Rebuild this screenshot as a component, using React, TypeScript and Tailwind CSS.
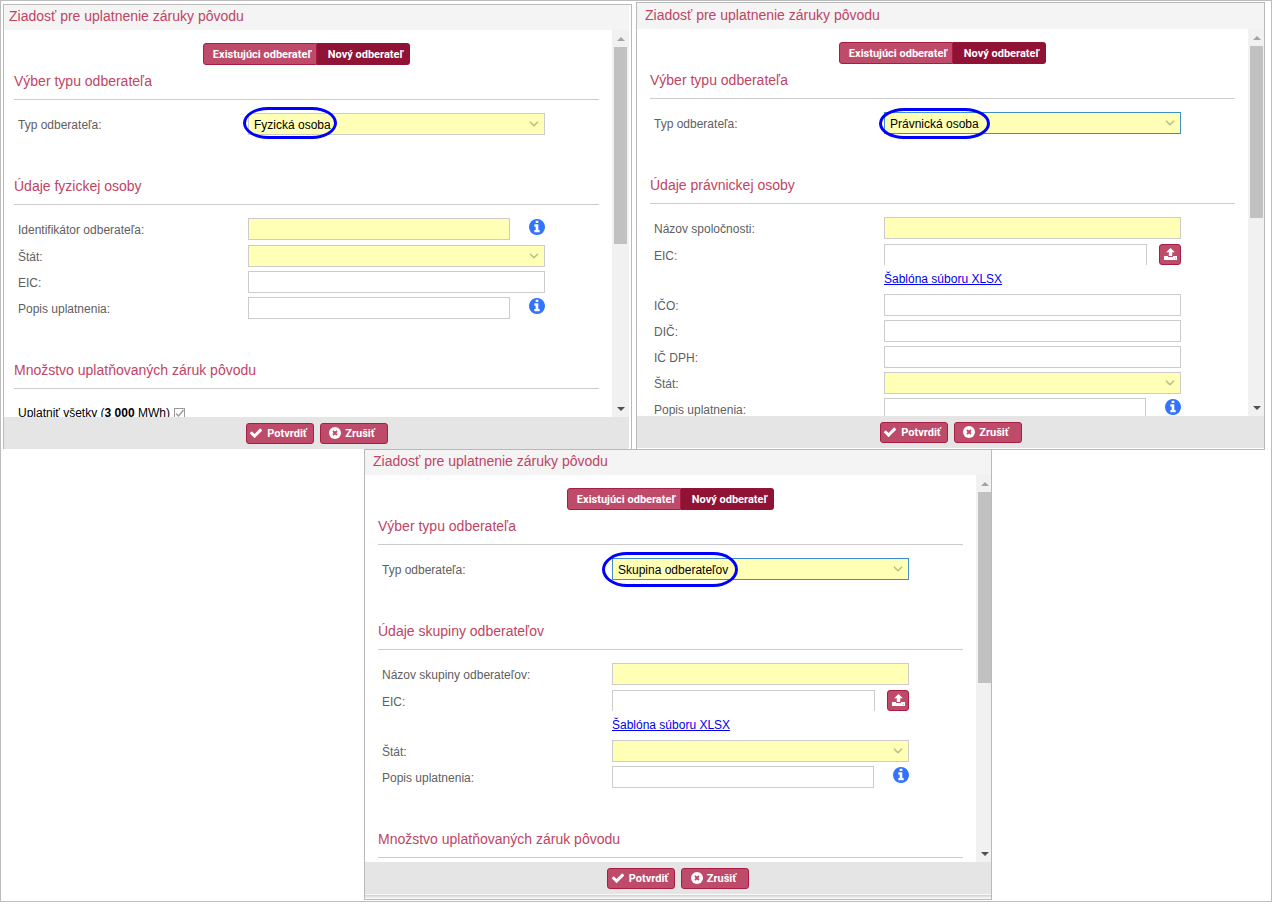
import React, { useId } from 'react'
import { clsx } from 'clsx'

type FieldKind = 'text' | 'info' | 'upload' | 'select'

interface Field {
    label: string
    kind: FieldKind
    required?: boolean
}

interface PanelProps {
    type: string
    typeFocused?: boolean
    sectionTitle: string
    fields: Field[]
    amount?: boolean
    className: string
    headerClass: string
    bodyClass: string
    footerClass?: string
    trackClass: string
    thumbClass: string
    markClass: string
    children?: React.ReactNode
}

const TYPES = ['Fyzická osoba', 'Právnická osoba', 'Skupina odberateľov']

const primaryButton = "cursor-pointer rounded-[3px] border border-[#a81d44] bg-[#bf4b6b] text-white"
const labelClass = "w-[230px] shrink-0 pt-px text-xs leading-[22px] text-[#606060]"

const CheckIcon = () => (
    <svg viewBox="0 0 1792 1792" className="mb-1 size-[14px]" fill="currentColor">
        <path d="M1671 566q0 40-28 68l-724 724-136 136q-28 28-68 28t-68-28l-136-136-362-362q-28-28-28-68t28-68l136-136q28-28 68-28t68 28l294 295 656-657q28-28 68-28t68 28l136 136q28 28 28 68z" />
    </svg>
)

const CancelIcon = () => (
    <svg viewBox="0 0 12 12" className="mb-1 size-3">
        <circle cx="6" cy="6" r="6" fill="currentColor" />
        <path d="M4 4 L8 8 M8 4 L4 8" stroke="#bf4b6b" strokeWidth="1.8" />
    </svg>
)

const InfoIcon = () => (
    <svg viewBox="0 0 1536 1536" className="size-4" fill="#3273ff">
        <path d="M1024 1248v-160q0-14-9-23t-23-9h-96v-512q0-14-9-23t-23-9h-320q-14 0-23 9t-9 23v160q0 14 9 23t23 9h96v320h-96q-14 0-23 9t-9 23v160q0 14 9 23t23 9h448q14 0 23-9t9-23zm-128-896v-160q0-14-9-23t-23-9h-192q-14 0-23 9t-9 23v160q0 14 9 23t23 9h192q14 0 23-9t9-23zm640 416q0 209-103 385.5t-279.5 279.5-385.5 103-385.5-103-279.5-279.5-103-385.5 103-385.5 279.5-279.5 385.5-103 385.5 103 279.5 279.5 103 385.5z" />
    </svg>
)

const UploadIcon = () => (
    <svg viewBox="0 0 13 12" className="mb-[2px] h-3 w-[13px]" fill="currentColor">
        <path d="M6.5 0 L10.8 4.2 H8.2 V8 H4.8 V4.2 H2.2 Z" />
        <path d="M0 8 H4 V9 H9 V8 H13 V12 H0 Z" />
        <path d="M11 10.4 H12" stroke="#bf4b6b" strokeWidth="0.6" />
    </svg>
)

const SelectBox = ({ id, options, focused }: { id: string, options: string[], focused?: boolean }) => (
    <div className="relative w-full">
        <select
            id={id}
            className={clsx(
                "block h-[22px] w-full appearance-none border bg-[#ffffb5] px-[5px] pt-px text-xs text-black outline-none",
                focused ? "border-[#3d8fc4]" : "border-[#cccccc]"
            )}
        >
            {options.map((o) => <option key={o}>{o}</option>)}
        </select>
        <svg viewBox="0 0 10 6" className="pointer-events-none absolute top-2 right-[6px] h-[6px] w-[10px]" fill="none" stroke="#b9b98c" strokeWidth="1.4">
            <path d="M1 0.8 L5 4.8 L9 0.8" />
        </svg>
    </div>
)

const FieldRow = ({ label, kind, required }: Field) => {
    const id = useId()
    const background = required ? "bg-[#ffffb5]" : "bg-white"

    return (
        <div className="flex min-h-[22px] first:not-last:mb-px">
            <label htmlFor={id} className={clsx(labelClass, "-mb-px")}>{label}</label>

            <div className="w-[297px]">
                {kind === 'select' && <SelectBox id={id} options={['']} />}

                {kind === 'text' && (
                    <input id={id} type="text" className={clsx("block h-[22px] w-full border border-[#cccccc] px-[5px] text-xs outline-none", background)} />
                )}

                {kind === 'info' && (
                    <div className="flex justify-between">
                        <input id={id} type="text" className={clsx("block h-[22px] w-[262px] border border-[#cccccc] px-[5px] text-xs outline-none", background)} />
                        <button type="button" aria-label="Info" className="h-[18px] cursor-pointer">
                            <InfoIcon />
                        </button>
                    </div>
                )}

                {kind === 'upload' && (
                    <>
                        <div className="flex justify-between">
                            <input id={id} type="text" className="block h-[21px] w-[263px] border border-b-0 border-[#cccccc] bg-white px-[5px] text-xs outline-none" />
                            <button type="button" aria-label="Upload" className={clsx(primaryButton, "flex h-[21px] w-[22px] items-center justify-center")}>
                                <UploadIcon />
                            </button>
                        </div>
                        <a href="#" className="block pt-1 pb-px text-xs leading-5 text-[#0000ee] underline">Šablóna súboru XLSX</a>
                    </>
                )}
            </div>
        </div>
    )
}

const Section = ({ title, children }: { title: string, children?: React.ReactNode }) => (
    <section className="mb-[41px]">
        <h2 className="border-b border-[#cccccc] pb-2 text-sm leading-5 text-[#bf4465]">{title}</h2>
        <div className="flex flex-col gap-1 pt-[13px] pl-1">{children}</div>
    </section>
)

const Scrollbar = ({ trackClass, thumbClass }: { trackClass: string, thumbClass: string }) => (
    <div className={clsx("flex shrink-0 flex-col justify-between bg-[#f1f1f1] pl-[2px]", trackClass)}>
        <div className="w-[13px]">
            <div className="flex h-[17px] items-center justify-center">
                <svg viewBox="0 0 8 4" className="h-1 w-2" fill="#a3a3a3"><path d="M0 4 L4 0 L8 4 Z" /></svg>
            </div>
            <div className={clsx("bg-[#c1c1c1]", thumbClass)} />
        </div>
        <div className="flex h-[17px] w-[13px] items-center justify-center">
            <svg viewBox="0 0 8 4" className="h-1 w-2" fill="#505050"><path d="M0 0 L4 4 L8 0 Z" /></svg>
        </div>
    </div>
)

const Panel = ({
    type, typeFocused, sectionTitle, fields, amount,
    className, headerClass, bodyClass, footerClass, trackClass, thumbClass, markClass, children
}: PanelProps) => {
    const typeId = useId()
    const allId = useId()

    return (
        <form onSubmit={(e) => e.preventDefault()} className={clsx("border-[#b9b9b9] bg-white", className)}>
            <h1 className={clsx("bg-[#f4f4f4] text-sm text-[#bf4465]", headerClass)}>
                Ziadosť pre uplatnenie záruky pôvodu
            </h1>

            <div className="flex h-[387px] overflow-hidden">
                <div className={clsx("min-w-0 flex-1 pt-[13px] pr-[13px]", bodyClass)}>
                    {/* Prepínač odberateľa */}
                    <div className="mb-[6px] flex justify-center font-[Roboto,Arial,sans-serif] text-[11px] font-bold text-white">
                        <button type="button" className="h-[22px] w-[114px] cursor-pointer rounded-l-[3px] border border-[#a81d44] bg-[#bf4b6b] pt-[2px] pl-1 whitespace-nowrap">
                            Existujúci odberateľ
                        </button>
                        <button type="button" className="h-[22px] w-[93px] cursor-pointer rounded-r-[3px] bg-[#901234] pt-[2px] pl-1 whitespace-nowrap">
                            Nový odberateľ
                        </button>
                    </div>

                    <Section title="Výber typu odberateľa">
                        <div className="flex h-[22px]">
                            <label htmlFor={typeId} className={labelClass}>Typ odberateľa:</label>
                            <div className="relative w-[297px]">
                                <SelectBox id={typeId} options={[type, ...TYPES.filter((t) => t !== type)]} focused={typeFocused} />
                                {/* Zvýraznenie vybraného typu */}
                                <span className={clsx("pointer-events-none absolute border-[3px] border-[#0000ff] [border-radius:25px/50%]", markClass)} />
                            </div>
                        </div>
                    </Section>

                    <Section title={sectionTitle}>
                        {fields.map((field) => <FieldRow key={field.label} {...field} />)}
                    </Section>

                    <Section title="Množstvo uplatňovaných záruk pôvodu">
                        {amount && (
                            <div className="flex items-center gap-1 text-xs leading-[22px] text-black">
                                <label htmlFor={allId}>Uplatniť všetky (<b>3 000</b> MWh)</label>
                                <span className="relative size-[11px]">
                                    <input id={allId} type="checkbox" defaultChecked className="block size-[11px] appearance-none border border-[#9a9a9a] bg-white" />
                                    <svg viewBox="0 0 11 11" className="pointer-events-none absolute inset-0 size-[11px]" fill="none" stroke="#9a9a9a" strokeWidth="1.4">
                                        <path d="M2 5.5 L4.5 8 L9.5 2" />
                                    </svg>
                                </span>
                            </div>
                        )}
                    </Section>
                </div>

                <Scrollbar trackClass={trackClass} thumbClass={thumbClass} />
            </div>

            <div className={clsx("flex h-8 justify-center gap-[6px] bg-[#e5e5e5] pt-[6px] font-[Roboto,Arial,sans-serif] text-[11px] font-bold", footerClass)}>
                <button type="submit" className={clsx(primaryButton, "flex h-[21px] w-[68px] items-center justify-center gap-1 pt-[2px] pr-[3px]")}>
                    <CheckIcon />
                    Potvrdiť
                </button>
                <button type="button" className={clsx(primaryButton, "flex h-[21px] w-[68px] items-center justify-center gap-1 pt-[2px] pr-[3px]")}>
                    <CancelIcon />
                    Zrušiť
                </button>
            </div>
            {children}
        </form>
    )
}

const App = () => {
    return (
        <main className="border border-[#bcbcbc] bg-white pb-px font-['Liberation_Sans',Arial,sans-serif]">
            <div className="grid grid-cols-2 items-start gap-1 pr-[6px] pl-[2px]">
                <Panel
                    type="Fyzická osoba"
                    sectionTitle="Údaje fyzickej osoby"
                    fields={[
                        { label: 'Identifikátor odberateľa:', kind: 'info', required: true },
                        { label: 'Štát:', kind: 'select', required: true },
                        { label: 'EIC:', kind: 'text' },
                        { label: 'Popis uplatnenia:', kind: 'info' },
                    ]}
                    amount
                    className="mt-[3px] border-x border-t pr-[2px]"
                    headerClass="h-[25px] pl-[5px] leading-[22px]"
                    bodyClass="pl-[10px]"
                    footerClass="rounded-br-[3px]"
                    trackClass="w-[17px]"
                    thumbClass="h-[197px]"
                    markClass="-top-[6px] -left-[5px] h-8 w-[94px]"
                />
                <Panel
                    type="Právnická osoba"
                    typeFocused
                    sectionTitle="Údaje právnickej osoby"
                    fields={[
                        { label: 'Názov spoločnosti:', kind: 'text', required: true },
                        { label: 'EIC:', kind: 'upload' },
                        { label: 'IČO:', kind: 'text' },
                        { label: 'DIČ:', kind: 'text' },
                        { label: 'IČ DPH:', kind: 'text' },
                        { label: 'Štát:', kind: 'select', required: true },
                        { label: 'Popis uplatnenia:', kind: 'info' },
                    ]}
                    className="mt-px border pb-px"
                    headerClass="h-[26px] pl-2 leading-6"
                    bodyClass="pl-[13px]"
                    trackClass="w-4"
                    thumbClass="h-[172px]"
                    markClass="-top-1 -left-[5px] h-[31px] w-[111px]"
                />
            </div>

            <div className="relative -mt-px pr-[279px] pl-[363px]">
                <Panel
                    type="Skupina odberateľov"
                    typeFocused
                    sectionTitle="Údaje skupiny odberateľov"
                    fields={[
                        { label: 'Názov skupiny odberateľov:', kind: 'text', required: true },
                        { label: 'EIC:', kind: 'upload' },
                        { label: 'Štát:', kind: 'select', required: true },
                        { label: 'Popis uplatnenia:', kind: 'info' },
                    ]}
                    className="border"
                    headerClass="h-[25px] pl-2 leading-[22px]"
                    bodyClass="pl-[13px]"
                    trackClass="w-[15px]"
                    thumbClass="h-[191px]"
                    markClass="-top-[6px] -left-[10px] h-[35px] w-[136px]"
                >
                    <div className="h-[5px] border-t border-[#f8f8f8] bg-linear-to-b from-[#cfcfcf] to-white" />
                </Panel>
            </div>
        </main>
    )
}

export default App
